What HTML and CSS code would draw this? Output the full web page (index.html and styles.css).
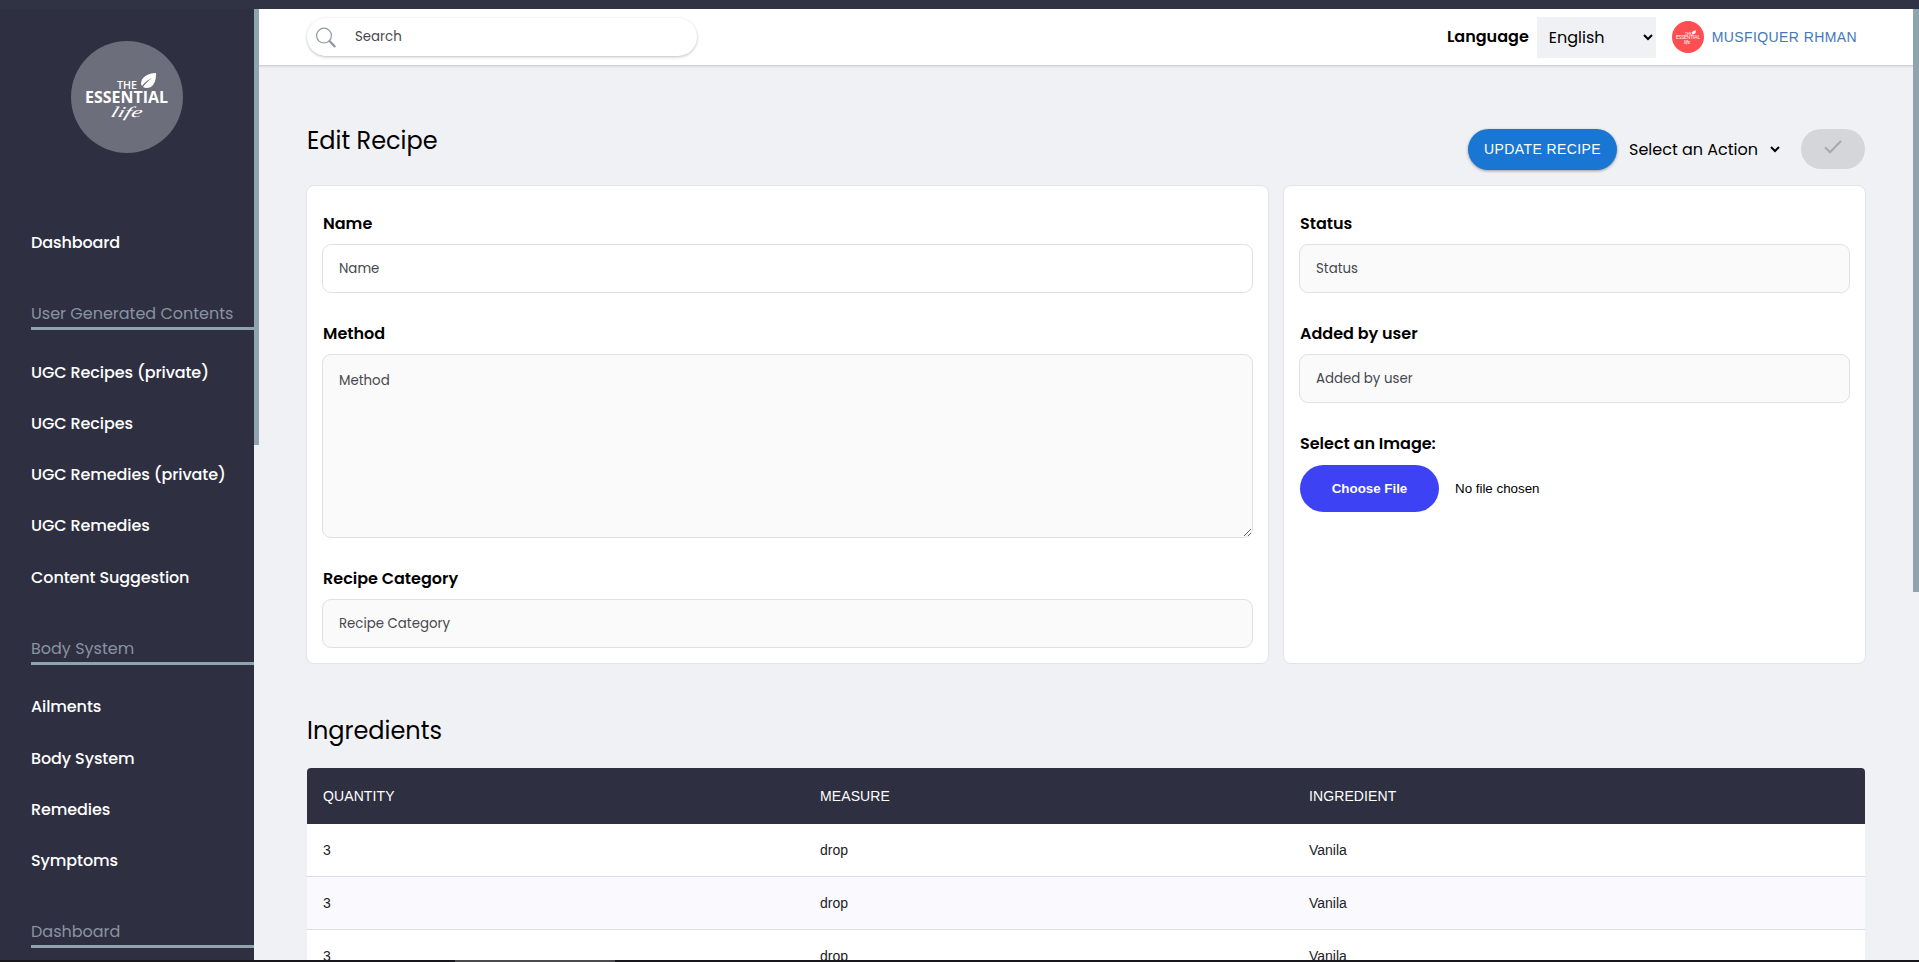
FILE: index.html
```html
<!DOCTYPE html>
<html lang="en">
<head>
    <meta charset="utf-8">
    <title>Edit Recipe</title>
    <meta name="viewport" content="width=device-width, initial-scale=1">
    <link rel="stylesheet" href="styles.css">
</head>
<body>
    <div class="topbar"></div>
    <div class="app">
        <aside class="sidebar">
            <svg class="logo" viewBox="0 0 112 112">
                <circle cx="56" cy="56" r="56" fill="#6d6e7b"/>
                <g fill="#fff" font-family="'Open Sans', sans-serif" font-weight="600">
                    <text x="46" y="48" font-size="11.5" textLength="20" lengthAdjust="spacingAndGlyphs">THE</text>
                    <text x="14" y="62" font-size="16.5" font-weight="bold" textLength="83" lengthAdjust="spacingAndGlyphs">ESSENTIAL</text>
                </g>
                <text transform="translate(39 75.500) skewX(-18)" fill="#fff" font-family="'Liberation Serif', serif" font-style="italic" font-size="15" textLength="31" lengthAdjust="spacingAndGlyphs">life</text>
                <path d="M85 32C77 32 70 36 70 43l1 2c3-4 6-6 10-8-4 3-7 6-9 9 3 2 8 1 10-2 3-4 3-8 3-12z" fill="#fff"/>
            </svg>
            <nav class="menu">
                <a href="#">Dashboard</a>
                <h4>User Generated Contents</h4>
                <a href="#">UGC Recipes (private)</a>
                <a href="#">UGC Recipes</a>
                <a href="#">UGC Remedies (private)</a>
                <a href="#">UGC Remedies</a>
                <a href="#">Content Suggestion</a>
                <h4>Body System</h4>
                <a href="#">Ailments</a>
                <a href="#">Body System</a>
                <a href="#">Remedies</a>
                <a href="#">Symptoms</a>
                <h4>Dashboard</h4>
            </nav>
        </aside>
        <div class="track"><div class="thumb thumb-menu"></div></div>

        <div class="page">
            <header class="header">
                <div class="search">
                    <svg width="20" height="21" viewBox="0 0 20 21" fill="none" stroke="#8f9ba5">
                        <circle cx="8" cy="8.600" r="7.400" stroke-width="1.2"/>
                        <path d="M13.500 14l5 5.300" stroke-width="2.4" stroke-linecap="round"/>
                    </svg>
                    <input type="text" placeholder="Search">
                </div>
                <div class="user">
                    <label for="language">Language</label>
                    <select id="language">
                        <option>English</option>
                    </select>
                    <svg class="avatar" viewBox="0 0 32 32">
                        <circle cx="16" cy="16" r="16" fill="#fd4f52"/>
                        <g fill="#fff" font-family="Lato, sans-serif">
                            <text x="13" y="14" font-size="3.5">THE</text>
                            <text x="4" y="18" font-size="5" textLength="24">ESSENTIAL</text>
                            <text x="12" y="22.500" font-size="5" font-style="italic">life</text>
                        </g>
                        <path d="M24 9.500c-3 0-4.500 1.500-4 4 2.500 0 4-1.500 4-4z" fill="#fff"/>
                    </svg>
                    <a href="#">MUSFIQUER RHMAN</a>
                </div>
            </header>

            <main class="content">
                <div class="title">
                    <h1>Edit Recipe</h1>
                    <div class="actions">
                        <button class="update">UPDATE RECIPE</button>
                        <select class="action">
                            <option>Select an Action</option>
                        </select>
                        <button class="confirm" disabled>
                            <svg width="18" height="14" viewBox="0 0 18 14" fill="none" stroke="#a8a9ab" stroke-width="2">
                                <path d="M1 7.300l5 5L17 1"/>
                            </svg>
                        </button>
                    </div>
                </div>

                <div class="cards">
                    <section class="card">
                        <label for="name">Name</label>
                        <input class="editable" id="name" type="text" placeholder="Name">
                        <label for="method">Method</label>
                        <textarea id="method" placeholder="Method"></textarea>
                        <label for="category">Recipe Category</label>
                        <input id="category" type="text" placeholder="Recipe Category">
                    </section>
                    <section class="card">
                        <label for="status">Status</label>
                        <input id="status" type="text" placeholder="Status">
                        <label for="added">Added by user</label>
                        <input id="added" type="text" placeholder="Added by user">
                        <label>Select an Image:</label>
                        <div class="file">
                            <button>Choose File</button>
                            <span>No file chosen</span>
                        </div>
                    </section>
                </div>

                <h2>Ingredients</h2>
                <table class="ingredients">
                    <thead>
                        <tr><th class="quantity">QUANTITY</th><th class="measure">MEASURE</th><th>INGREDIENT</th></tr>
                    </thead>
                    <tbody>
                        <tr><td>3</td><td>drop</td><td>Vanila</td></tr>
                        <tr><td>3</td><td>drop</td><td>Vanila</td></tr>
                        <tr><td>3</td><td>drop</td><td>Vanila</td></tr>
                    </tbody>
                </table>
            </main>
        </div>
        <div class="track"><div class="thumb thumb-page"></div></div>
    </div>
    <div class="bottombar"><div></div></div>
</body>
</html>
```

FILE: styles.css
```css
* {
    box-sizing: border-box;
}
body {
    margin: 0;
    height: 100vh;
    display: flex;
    flex-direction: column;
    overflow: hidden;
    background: #f0f1f5;
    color: #000;
    font-family: Poppins, Inter, sans-serif;
    font-size: 16px;
    line-height: 24px;
}
h1, h2, h4 {
    margin: 0;
    font-weight: 400;
}
a {
    text-decoration: none;
}
input, select, textarea, button {
    font: inherit;
    letter-spacing: inherit;
    border: 0;
    outline: 0;
}
.topbar {
    height: 9px;
    flex: none;
    background: #303343;
}
.bottombar {
    height: 2px;
    flex: none;
    background: #17171c;
}
.bottombar div {
    width: 160px;
    height: 2px;
    margin-left: 455px;
    background: #4b4b4e;
}
.app {
    display: flex;
    flex: 1;
    min-height: 0;
}
.track {
    width: 5px;
    flex: none;
}
.track:last-child {
    width: 6px;
}
.thumb {
    background: #90a4ae;
}
.thumb-menu {
    height: 436px;
}
.thumb-page {
    height: 583px;
}

/* sidebar */
.sidebar {
    width: 254px;
    flex: none;
    overflow: hidden;
    padding-top: 32px;
    background: #2e2f40;
}
.logo {
    display: block;
    width: 112px;
    height: 112px;
    margin-left: 71px;
}
.menu {
    padding: 64px 0 0 31px;
}
.menu a {
    display: block;
    height: 51.200px;
    line-height: 51.200px;
    color: #fff;
    font-weight: 500;
    letter-spacing: -.1px;
}
.menu h4 {
    height: 30px;
    margin: 32px 0 16.600px;
    border-bottom: 3px solid #90a4ae;
    color: #8a93a1;
    line-height: 27px;
}

/* header */
.page {
    flex: 1;
    min-width: 0;
    overflow: hidden;
}
.header {
    display: flex;
    justify-content: space-between;
    align-items: flex-start;
    height: 57px;
    padding: 8px 56px 0 48px;
    background: #fff;
    border-bottom: 1px solid #cfd2d6;
    box-shadow: 0 1px 2px #00000018;
}
.search {
    display: flex;
    align-items: center;
    width: 390px;
    height: 38px;
    margin-top: 1px;
    padding-left: 9px;
    border-radius: 19px;
    box-shadow: 0 1px 3px #00000040;
}
.search input {
    width: 300px;
    margin-left: 17px;
    padding: 0 0 0 2px;
    background: none;
    font-size: 13.333px;
}
::placeholder {
    color: #46474e;
    opacity: 1;
}
.user {
    display: flex;
    align-items: center;
    height: 41px;
}
.user label {
    margin-right: 8px;
    padding-bottom: 1px;
    font-weight: 600;
}
.user select {
    width: 119px;
    height: 41px;
    padding-left: 8px;
    background: #f0f1f5;
}
.avatar {
    width: 32px;
    height: 32px;
    margin: 0 8px 1px 16px;
}
.user a {
    padding-bottom: 2px;
    color: #4478b8;
    font-family: "Liberation Sans", sans-serif;
    font-size: 14px;
    letter-spacing: .4px;
}

/* content */
.content {
    padding: 0 48px;
}
.title {
    display: flex;
    justify-content: space-between;
    align-items: flex-start;
    padding-top: 63px;
    height: 119px;
}
h1, h2 {
    font-size: 24px;
    line-height: 24px;
}
.actions {
    display: flex;
    align-items: flex-start;
    height: 41px;
}
.update {
    width: 149px;
    height: 41px;
    padding-bottom: 2px;
    border-radius: 21px;
    background: #1976d2;
    box-shadow: 0 1px 3px #00000060;
    color: #fff;
    font-family: "Liberation Sans", sans-serif;
    font-size: 14px;
    letter-spacing: .4px;
}
.action {
    width: 158px;
    height: 41px;
    margin: 0 18px 0 8px;
    background: transparent;
}
.confirm {
    width: 64px;
    height: 40px;
    border-radius: 20px;
    background: #d5d6da;
}
.cards {
    display: flex;
    gap: 14px;
    height: 479px;
    margin-left: -1px;
}
.card {
    width: 963px;
    flex: none;
    padding: 26px 15px 0;
    background: #fff;
    border: 1px solid #e2e4e8;
    border-radius: 8px;
}
.card + .card {
    width: 583px;
}
.card label {
    display: block;
    height: 32px;
    padding-left: 1px;
    font-weight: 600;
}
.card input, .card textarea {
    display: block;
    width: 100%;
    height: 49px;
    margin-bottom: 29px;
    padding: 1px 16px 0;
    background: #fafafa;
    border: 1px solid #dfe1e3;
    border-radius: 9px;
    font-size: 13.333px;
}
.card textarea {
    height: 184px;
    padding-top: 14px;
}
.card .editable {
    background: #fff;
}
.file {
    display: flex;
    align-items: center;
    padding-top: 1px;
    font-family: "Liberation Sans", sans-serif;
    font-size: 13.333px;
}
.file button {
    width: 139px;
    height: 47px;
    margin: 0 16px 0 1px;
    border-radius: 24px;
    background: #3d42f5;
    color: #fff;
    font-weight: bold;
}
h2 {
    margin: 55px 0 25px;
}

/* ingredients */
.ingredients {
    width: 100%;
    table-layout: fixed;
    border-spacing: 0;
    background: #fff;
    border-radius: 4px;
    overflow: hidden;
    font-family: "Liberation Sans", sans-serif;
    font-size: 14px;
}
.ingredients th {
    height: 56px;
    padding: 0 16px;
    background: #2e2f40;
    color: #fff;
    font-weight: 400;
    letter-spacing: .1px;
    text-align: left;
}
.quantity {
    width: 497px;
}
.measure {
    width: 489px;
}
.ingredients td {
    height: 53px;
    padding: 0 16px;
    border-bottom: 1px solid #dcdee3;
    color: #222;
}
.ingredients tr:nth-child(even) td {
    background: #fafafe;
}
```
